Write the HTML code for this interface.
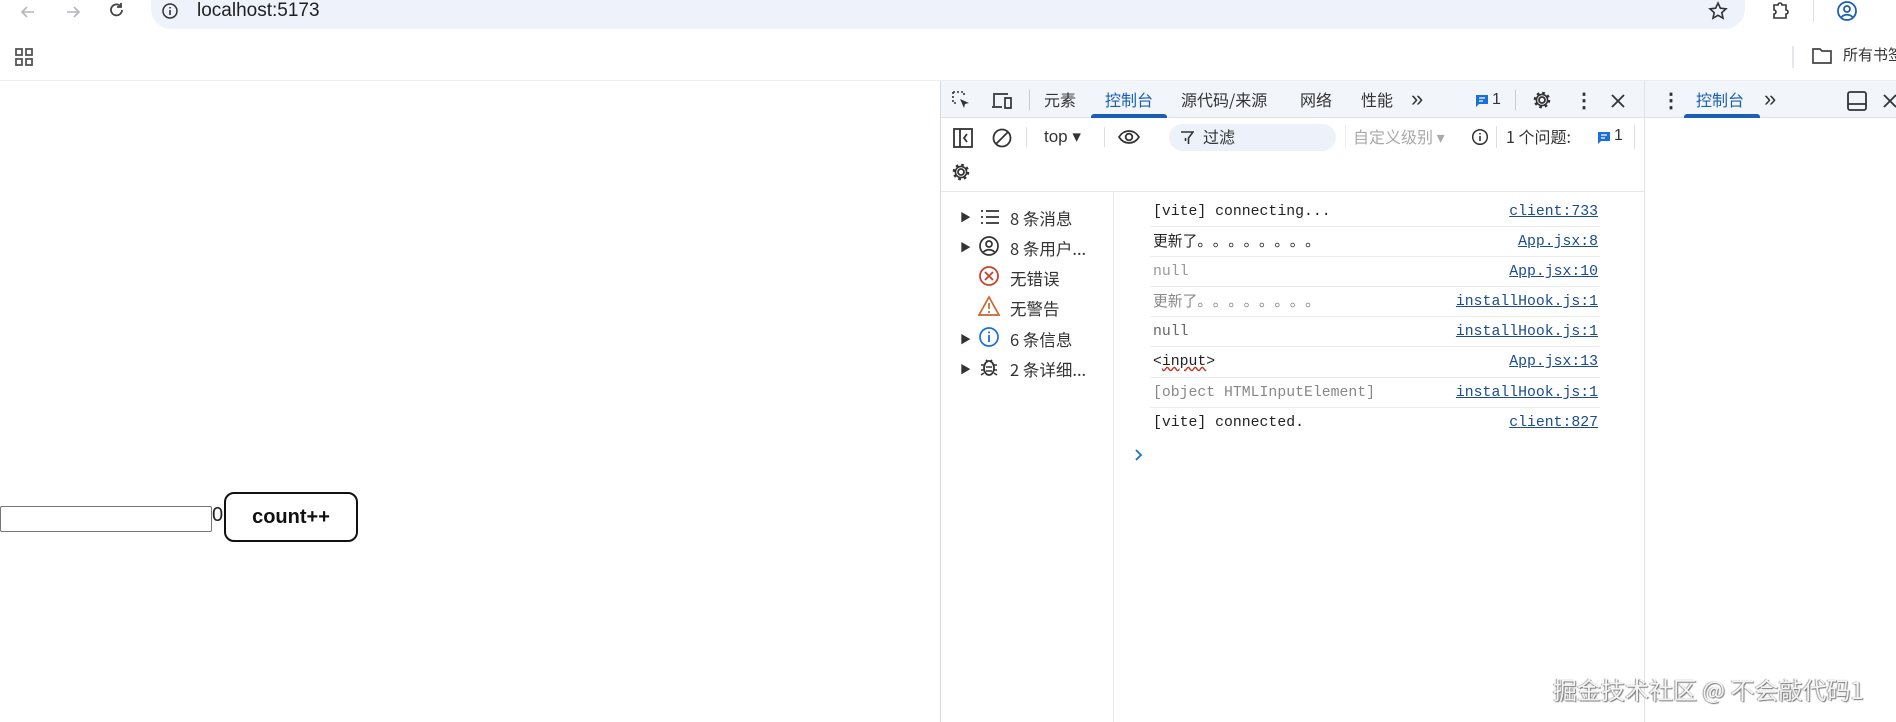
<!DOCTYPE html>
<html><head><meta charset="utf-8"><style>
*{margin:0;padding:0;box-sizing:border-box}
body{width:1896px;height:722px;position:relative;overflow:hidden;background:#fff;font-family:"Liberation Sans","Noto Sans CJK SC",sans-serif;color:#1f1f1f}
.a{position:absolute;white-space:nowrap}
.cj{font-family:"Noto Sans CJK SC","Liberation Sans",sans-serif}
.mono{font-family:"Liberation Mono","Noto Sans CJK SC",monospace;font-size:14.8px}
.zh{font-family:"Noto Sans CJK SC",sans-serif;font-size:14.8px}
.dots{font-family:"Noto Sans CJK SC",sans-serif;letter-spacing:8px}
.lnk{color:#1a4c8f;text-decoration:underline;right:298px}
.sep{position:absolute;left:1150px;width:450px;height:1px;background:#e8eaed}
svg{position:absolute}
</style></head><body>
<!-- browser chrome -->
<div class="a" style="left:151px;top:-10px;width:1594px;height:39px;background:#eef3fb;border-radius:0 0 20px 20px"></div>
<svg style="left:18px;top:2px" width="20" height="20" viewBox="0 0 20 20"><path d="M16 10H4M9 5L4 10l5 5" stroke="#b4b7bb" stroke-width="1.6" fill="none"/></svg>
<svg style="left:63px;top:2px" width="20" height="20" viewBox="0 0 20 20"><path d="M4 10h12M11 5l5 5-5 5" stroke="#b4b7bb" stroke-width="1.6" fill="none"/></svg>
<svg style="left:107px;top:1px" width="20" height="20" viewBox="0 0 20 20"><path d="M15 9a5.5 5.5 0 1 1-1.6-4M14 2v4h-4" stroke="#444" stroke-width="1.8" fill="none"/></svg>
<svg style="left:161px;top:2px" width="18" height="18" viewBox="0 0 18 18"><circle cx="9" cy="9" r="7" stroke="#333" stroke-width="1.5" fill="none"/><path d="M9 8v5M9 5v1.5" stroke="#333" stroke-width="1.6"/></svg>
<div class="a" style="left:197px;top:0px;font-size:19px;color:#1f1f1f">localhost:5173</div>
<svg style="left:1707px;top:0px" width="22" height="22" viewBox="0 0 22 22"><path d="M11 3l2.4 5.2 5.6.6-4.2 3.8 1.2 5.6L11 15.3 6 18.2l1.2-5.6L3 8.8l5.6-.6z" stroke="#333" stroke-width="1.6" fill="none"/></svg>
<svg style="left:1770px;top:0px" width="22" height="22" viewBox="0 0 22 22"><path d="M4 5h4a2 2 0 0 1 4 0h4v5a2 2 0 0 1 0 4v4H4v-4a2 2 0 0 0 0-4z" stroke="#333" stroke-width="1.6" fill="none"/></svg>
<div class="a" style="left:1813px;top:0;width:1px;height:22px;background:#dde"></div>
<svg style="left:1835px;top:-1px" width="24" height="24" viewBox="0 0 24 24"><circle cx="12" cy="12" r="9" stroke="#1a5fb4" stroke-width="1.8" fill="none"/><circle cx="12" cy="10" r="3" stroke="#1a5fb4" stroke-width="1.8" fill="none"/><path d="M6.5 18c3-3 8-3 11 0" stroke="#1a5fb4" stroke-width="1.8" fill="none"/></svg>
<div class="a" style="left:1889px;top:0;font-size:20px;color:#444;font-weight:bold">⋮</div>
<svg style="left:14px;top:47px" width="20" height="20" viewBox="0 0 20 20"><g stroke="#555" stroke-width="1.8" fill="none"><rect x="2" y="2" width="6" height="6"/><rect x="12" y="2" width="6" height="6"/><rect x="2" y="12" width="6" height="6"/><rect x="12" y="12" width="6" height="6"/></g></svg>
<div class="a" style="left:1792px;top:46px;width:2px;height:22px;background:#e4e8ee"></div>
<svg style="left:1811px;top:46px" width="22" height="20" viewBox="0 0 22 20"><path d="M2 3h7l2 2h9v12H2z" stroke="#444" stroke-width="1.7" fill="none"/></svg>
<div class="a cj" style="left:1843px;top:44px;font-size:15px;color:#333">所有书签</div>
<div class="a" style="left:0;top:80px;width:1896px;height:1px;background:#eceef1"></div>

<!-- page content -->
<div class="a" style="left:0;top:506px;width:212px;height:26px;border:1px solid #767676;border-radius:2px"></div>
<div class="a" style="left:212px;top:504px;font-size:20px;color:#222">0</div>
<div class="a" style="left:224px;top:492px;width:134px;height:50px;border:2px solid #111;border-radius:10px;font-size:20px;font-weight:bold;text-align:center;line-height:46px;color:#111">count++</div>

<!-- devtools -->
<div class="a" style="left:940px;top:81px;width:956px;height:641px;background:#fff;border-left:1px solid #d6d9de"></div>
<div class="a" style="left:941px;top:81px;width:955px;height:37px;background:#f2f5fa;border-bottom:1px solid #dfe3e8"></div>
<div class="a" style="left:1644px;top:81px;width:1px;height:641px;background:#dfe3e8"></div>
<svg style="left:951px;top:90px" width="22" height="22" viewBox="0 0 22 22"><path d="M2 2h11v3M2 2v11h3" stroke="#333" stroke-width="1.6" stroke-dasharray="2 2" fill="none"/><path d="M9 9l9 4-4 1-1 4z" fill="#333"/></svg>
<svg style="left:990px;top:90px" width="24" height="22" viewBox="0 0 24 22"><path d="M4 16V4h14M2 17h10M15 8h6v10h-6z" stroke="#333" stroke-width="1.7" fill="none"/></svg>
<div class="a" style="left:1029px;top:90px;width:1px;height:20px;background:#ccc"></div>
<div class="a cj" style="left:1044px;top:87px;font-size:16px;color:#333">元素</div>
<div class="a cj" style="left:1105px;top:87px;font-size:16px;color:#1a5fb4">控制台</div>
<div class="a" style="left:1091px;top:114px;width:76px;height:4px;background:#1a5fb4;border-radius:3px 3px 0 0"></div>
<div class="a cj" style="left:1181px;top:87px;font-size:16px;color:#333">源代码/来源</div>
<div class="a cj" style="left:1300px;top:87px;font-size:16px;color:#333">网络</div>
<div class="a cj" style="left:1361px;top:87px;font-size:16px;color:#333">性能</div>
<div class="a" style="left:1411px;top:87px;font-size:22px;line-height:24px;color:#333">»</div>
<svg style="left:1475px;top:94px" width="14" height="14" viewBox="0 0 14 14"><path d="M1 1h12v9H4l-3 3z" fill="#1a6fd8"/><path d="M4 4h6M4 7h4" stroke="#fff" stroke-width="1.2"/></svg>
<div class="a" style="left:1492px;top:91px;font-size:16px;color:#333">1</div>
<div class="a" style="left:1515px;top:90px;width:1px;height:20px;background:#ccc"></div>
<svg style="left:1531px;top:89px" width="22" height="22" viewBox="0 0 22 22"><circle cx="11" cy="11" r="3" stroke="#333" stroke-width="1.8" fill="none"/><circle cx="11" cy="11" r="7" stroke="#333" stroke-width="2.6" stroke-dasharray="2.6 2.9" fill="none"/><circle cx="11" cy="11" r="5.6" stroke="#333" stroke-width="1.6" fill="none"/></svg>
<div class="a" style="left:1574px;top:88px;font-size:20px;color:#333;font-weight:bold">⋮</div>
<svg style="left:1610px;top:93px" width="16" height="16" viewBox="0 0 16 16"><path d="M2 2l12 12M14 2L2 14" stroke="#333" stroke-width="1.8"/></svg>
<div class="a" style="left:1661px;top:88px;font-size:20px;color:#333;font-weight:bold">⋮</div>
<div class="a cj" style="left:1696px;top:87px;font-size:16px;color:#1a5fb4">控制台</div>
<div class="a" style="left:1684px;top:114px;width:76px;height:4px;background:#1a5fb4;border-radius:3px 3px 0 0"></div>
<div class="a" style="left:1764px;top:87px;font-size:22px;line-height:24px;color:#333">»</div>
<svg style="left:1846px;top:90px" width="22" height="22" viewBox="0 0 22 22"><rect x="2" y="2" width="18" height="18" rx="2" stroke="#333" stroke-width="1.8" fill="none"/><path d="M2 14h18" stroke="#333" stroke-width="1.8"/></svg>
<svg style="left:1882px;top:93px" width="16" height="16" viewBox="0 0 16 16"><path d="M2 2l12 12M14 2L2 14" stroke="#333" stroke-width="1.8"/></svg>

<!-- second toolbar -->
<svg style="left:952px;top:127px" width="22" height="22" viewBox="0 0 22 22"><rect x="2" y="2" width="18" height="18" stroke="#333" stroke-width="1.8" fill="none"/><path d="M8 2v18M15 7l-3 4 3 4" stroke="#333" stroke-width="1.8" fill="none"/></svg>
<svg style="left:991px;top:127px" width="22" height="22" viewBox="0 0 22 22"><circle cx="11" cy="11" r="8.5" stroke="#333" stroke-width="1.8" fill="none"/><path d="M5 17L17 5" stroke="#333" stroke-width="1.8"/></svg>
<div class="a" style="left:1026px;top:127px;width:1px;height:20px;background:#ddd"></div>
<div class="a" style="left:1044px;top:127px;font-size:17px;color:#333">top ▾</div>
<div class="a" style="left:1104px;top:127px;width:1px;height:20px;background:#ddd"></div>
<svg style="left:1117px;top:127px" width="24" height="20" viewBox="0 0 24 20"><path d="M2 10c5-8 15-8 20 0c-5 8-15 8-20 0z" stroke="#333" stroke-width="1.7" fill="none"/><circle cx="12" cy="10" r="3.3" stroke="#333" stroke-width="1.8" fill="none"/></svg>
<div class="a" style="left:1169px;top:124px;width:167px;height:27px;background:#ecf1fa;border-radius:14px"></div>
<svg style="left:1180px;top:130px" width="14" height="16" viewBox="0 0 14 16"><path d="M1 2h12L8.5 8v6M5.5 8v3" stroke="#333" stroke-width="1.6" fill="none"/></svg>
<div class="a cj" style="left:1203px;top:124px;font-size:16px;color:#333">过滤</div>
<div class="a" style="left:1345px;top:125px;width:1px;height:24px;background:#eee"></div>
<div class="a cj" style="left:1353px;top:124px;font-size:16px;color:#aaa">自定义级别 ▾</div>
<svg style="left:1471px;top:128px" width="18" height="18" viewBox="0 0 18 18"><circle cx="9" cy="9" r="7.3" stroke="#333" stroke-width="1.5" fill="none"/><path d="M9 8v5M9 5v1.5" stroke="#333" stroke-width="1.6"/></svg>
<div class="a" style="left:1496px;top:126px;width:1px;height:22px;background:#ddd"></div>
<div class="a cj" style="left:1506px;top:124px;font-size:16px;color:#333">1 个问题:</div>
<svg style="left:1597px;top:131px" width="14" height="14" viewBox="0 0 14 14"><path d="M1 1h12v9H4l-3 3z" fill="#1a6fd8"/><path d="M4 4h6M4 7h4" stroke="#fff" stroke-width="1.2"/></svg>
<div class="a" style="left:1614px;top:127px;font-size:16px;color:#333">1</div>
<div class="a" style="left:1634px;top:125px;width:1px;height:24px;background:#ddd"></div>
<svg style="left:950px;top:161px" width="22" height="22" viewBox="0 0 22 22"><circle cx="11" cy="11" r="3" stroke="#333" stroke-width="1.8" fill="none"/><circle cx="11" cy="11" r="7" stroke="#333" stroke-width="2.6" stroke-dasharray="2.6 2.9" fill="none"/><circle cx="11" cy="11" r="5.6" stroke="#333" stroke-width="1.6" fill="none"/></svg>
<div class="a" style="left:941px;top:191px;width:703px;height:1px;background:#e5e7eb"></div>
<div class="a" style="left:1113px;top:191px;width:1px;height:531px;background:#e5e7eb"></div>

<!-- sidebar -->
<div class="a" style="left:960px;top:209px;font-size:11px;color:#333">▶</div>
<svg style="left:979px;top:207px" width="22" height="20" viewBox="0 0 22 20"><path d="M2 4h2M2 10h2M2 16h2M7 4h13M7 10h13M7 16h13" stroke="#333" stroke-width="1.8"/></svg>
<div class="a cj" style="left:1010px;top:206px;font-size:16.5px;color:#333">8 条消息</div>
<div class="a" style="left:960px;top:239px;font-size:11px;color:#333">▶</div>
<svg style="left:978px;top:235px" width="22" height="22" viewBox="0 0 22 22"><circle cx="11" cy="11" r="9" stroke="#333" stroke-width="1.7" fill="none"/><circle cx="11" cy="9" r="3" stroke="#333" stroke-width="1.7" fill="none"/><path d="M5.5 17c3-3 8-3 11 0" stroke="#333" stroke-width="1.7" fill="none"/></svg>
<div class="a cj" style="left:1010px;top:236px;font-size:16.5px;color:#333">8 条用户...</div>
<svg style="left:978px;top:265px" width="22" height="22" viewBox="0 0 22 22"><circle cx="11" cy="11" r="9" stroke="#c5432a" stroke-width="1.8" fill="none"/><path d="M7 7l8 8M15 7l-8 8" stroke="#c5432a" stroke-width="1.8"/></svg>
<div class="a cj" style="left:1010px;top:266px;font-size:16.5px;color:#333">无错误</div>
<svg style="left:978px;top:295px" width="22" height="22" viewBox="0 0 22 22"><path d="M11 2L21 20H1z" stroke="#c8682e" stroke-width="1.7" fill="none"/><path d="M11 8v6M11 16v2" stroke="#c8682e" stroke-width="1.7"/></svg>
<div class="a cj" style="left:1010px;top:296px;font-size:16.5px;color:#333">无警告</div>
<div class="a" style="left:960px;top:331px;font-size:11px;color:#333">▶</div>
<svg style="left:978px;top:326px" width="22" height="22" viewBox="0 0 22 22"><circle cx="11" cy="11" r="9" stroke="#1a6fd8" stroke-width="1.7" fill="none"/><path d="M11 9v7M11 5.5v1.8" stroke="#1a6fd8" stroke-width="1.8"/></svg>
<div class="a cj" style="left:1010px;top:327px;font-size:16.5px;color:#333">6 条信息</div>
<div class="a" style="left:960px;top:361px;font-size:11px;color:#333">▶</div>
<svg style="left:979px;top:356px" width="20" height="22" viewBox="0 0 20 22"><ellipse cx="10" cy="12" rx="5" ry="7" stroke="#333" stroke-width="1.8" fill="none"/><path d="M7 4l2 2M13 4l-2 2M2 9h3M15 9h3M2 14h3M15 14h3M2 19l3-2M18 19l-3-2M7 11h6M7 15h6" stroke="#333" stroke-width="1.6"/></svg>
<div class="a cj" style="left:1010px;top:357px;font-size:16.5px;color:#333">2 条详细...</div>

<!-- console messages -->
<div class="a mono" style="left:1153px;top:204px;color:#222">[vite] connecting...</div>
<div class="a mono lnk" style="top:204px">client:733</div>
<div class="sep" style="top:226px"></div>
<div class="a zh" style="left:1153px;top:230px;color:#222">更新了<span class="dots">。。。。。。。。</span></div>
<div class="a mono lnk" style="top:234px">App.jsx:8</div>
<div class="sep" style="top:256px"></div>
<div class="a mono" style="left:1153px;top:264px;color:#999">null</div>
<div class="a mono lnk" style="top:264px">App.jsx:10</div>
<div class="sep" style="top:286px"></div>
<div class="a zh" style="left:1153px;top:290px;color:#888">更新了<span class="dots">。。。。。。。。</span></div>
<div class="a mono lnk" style="top:294px">installHook.js:1</div>
<div class="sep" style="top:316px"></div>
<div class="a mono" style="left:1153px;top:324px;color:#666">null</div>
<div class="a mono lnk" style="top:324px">installHook.js:1</div>
<div class="sep" style="top:346px"></div>
<div class="a mono" style="left:1153px;top:354px;color:#222">&lt;<span style="text-decoration:underline wavy #c0392b">input</span>&gt;</div>
<div class="a mono lnk" style="top:354px">App.jsx:13</div>
<div class="sep" style="top:377px"></div>
<div class="a mono" style="left:1153px;top:385px;color:#888">[object HTMLInputElement]</div>
<div class="a mono lnk" style="top:385px">installHook.js:1</div>
<div class="sep" style="top:407px"></div>
<div class="a mono" style="left:1153px;top:415px;color:#222">[vite] connected.</div>
<div class="a mono lnk" style="top:415px">client:827</div>
<svg style="left:1134px;top:448px" width="10" height="14" viewBox="0 0 10 14"><path d="M2 2l5 5-5 5" stroke="#1a6fd8" stroke-width="1.8" fill="none"/></svg>

<!-- watermark -->
<div class="a cj" style="left:1553px;top:671px;font-size:24px;color:#f4f4f4;text-shadow:1px 1px 1px #777,-1px 0 1px #999">掘金技术社区 @ 不会敲代码1</div>
</body></html>
